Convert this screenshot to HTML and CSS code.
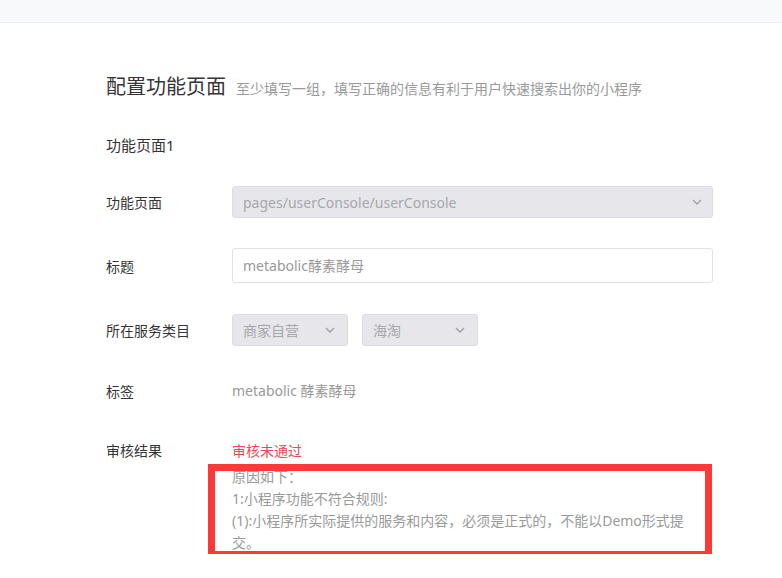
FILE: index.html
```html
<!DOCTYPE html>
<html lang="zh-CN">
<head>
    <meta charset="UTF-8">
    <meta name="viewport" content="width=device-width, initial-scale=1.0">
    <title>配置功能页面</title>
    <link rel="stylesheet" href="styles.css">
</head>
<body>
    <div class="top-bar"></div>

    <div class="page">
        <div class="page-header">
            <h2>配置功能页面</h2>
            <span class="tips">至少填写一组，填写正确的信息有利于用户快速搜索出你的小程序</span>
        </div>

        <h3 class="group-title">功能页面1</h3>

        <div class="form-row row-page">
            <label>功能页面</label>
            <div class="select select-wide">
                <span>pages/userConsole/userConsole</span>
                <svg class="arrow" width="10" height="6" viewBox="0 0 10 6"><polyline points="1,1 5,5 9,1" fill="none" stroke="#a0a0a6" stroke-width="1.4"/></svg>
            </div>
        </div>

        <div class="form-row row-title">
            <label>标题</label>
            <div class="input">metabolic酵素酵母</div>
        </div>

        <div class="form-row row-category">
            <label>所在服务类目</label>
            <div class="select select-small">
                <span>商家自营</span>
                <svg class="arrow" width="10" height="6" viewBox="0 0 10 6"><polyline points="1,1 5,5 9,1" fill="none" stroke="#a0a0a6" stroke-width="1.4"/></svg>
            </div>
            <div class="select select-small">
                <span>海淘</span>
                <svg class="arrow" width="10" height="6" viewBox="0 0 10 6"><polyline points="1,1 5,5 9,1" fill="none" stroke="#a0a0a6" stroke-width="1.4"/></svg>
            </div>
        </div>

        <div class="form-row row-tag">
            <label>标签</label>
            <div class="value">metabolic 酵素酵母</div>
        </div>

        <div class="form-row row-result">
            <label>审核结果</label>
            <div class="result">
                <div class="status">审核未通过</div>
                <div class="reasons">
                    <p>原因如下：</p>
                    <p>1:小程序功能不符合规则:</p>
                    <p>(1):小程序所实际提供的服务和内容，必须是正式的，不能以Demo形式提交。</p>
                </div>
                <div class="mark-box"></div>
            </div>
        </div>
    </div>
</body>
</html>
```

FILE: styles.css
```css
body {
    margin: 0;
    padding: 0;
    background: #fff;
    font-family: "Noto Sans", "Noto Sans CJK SC", sans-serif;
    color: #353535;
}
.top-bar {
    height: 22px;
    background: #f8f9fb;
    border-bottom: 1px solid #eff0f3;
}
.page {
    padding: 0 69px 0 106px;
}
.page-header {
    display: flex;
    align-items: baseline;
    margin-top: 50px;
    height: 28px;
}
.page-header h2 {
    margin: 0;
    font-size: 20px;
    font-weight: normal;
    line-height: 28px;
    color: #353535;
}
.tips {
    margin-left: 10px;
    font-size: 14px;
    color: #9a9a9a;
}
.group-title {
    margin: 32px 0 0;
    font-size: 15px;
    font-weight: normal;
    line-height: 24px;
    color: #353535;
}
.form-row {
    display: flex;
    align-items: center;
}
.form-row label {
    width: 126px;
    flex-shrink: 0;
    font-size: 14px;
    color: #353535;
}
.row-page {
    margin-top: 29px;
    height: 32px;
}
.row-title {
    margin-top: 30px;
    height: 35px;
}
.row-category {
    margin-top: 31px;
    height: 32px;
}
.row-tag {
    margin-top: 33px;
    height: 24px;
}
.row-result {
    margin-top: 35px;
    align-items: flex-start;
}
.select {
    display: flex;
    align-items: center;
    justify-content: space-between;
    box-sizing: border-box;
    height: 32px;
    padding: 0 10px;
    background: #e7e7eb;
    border: 1px solid #dedee2;
    border-radius: 3px;
    font-size: 14px;
    color: #a6a6ab;
}
.select-wide {
    flex: 1;
}
.select-small {
    width: 116px;
    margin-right: 14px;
}
.select-small .arrow {
    margin-right: 2px;
}
.input {
    flex: 1;
    box-sizing: border-box;
    height: 35px;
    padding: 0 10px;
    line-height: 33px;
    border: 1px solid #e2e2e2;
    border-radius: 3px;
    font-size: 14px;
    color: #9a9a9a;
}
.value {
    font-size: 14px;
    line-height: 24px;
    color: #9a9a9a;
}
.form-row.row-result label {
    line-height: 26px;
}
.result {
    position: relative;
    flex: 1;
}
.status {
    font-size: 14px;
    line-height: 26px;
    color: #ee4a50;
}
.reasons {
    margin-top: 2px;
    max-width: 462px;
}
.reasons p {
    margin: 0;
    font-size: 14px;
    line-height: 22px;
    color: #9a9a9a;
}
/* red annotation box drawn over the reasons */
.mark-box {
    position: absolute;
    left: -24px;
    top: 26px;
    width: 504px;
    height: 94px;
    box-sizing: border-box;
    border: 7px solid #ff3838;
}
```
